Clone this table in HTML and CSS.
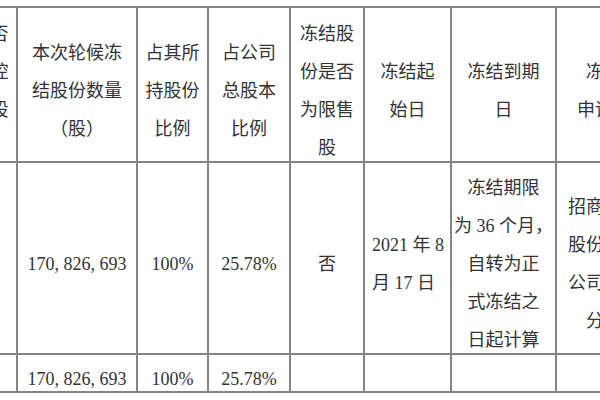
FILE: index.html
```html
<!DOCTYPE html>
<html lang="zh-CN">
<head>
<meta charset="utf-8">
<title>冻结股份</title>
<link rel="stylesheet" href="styles.css">
</head>
<body>
<div class="page">
  <div class="grid">
    <div class="cell"><div class="txt">是否<br>为控<br>股股<br>东</div></div>
    <div class="cell"><div class="txt">本次轮候冻<br>结股份数量<br>（股）</div></div>
    <div class="cell"><div class="txt">占其所<br>持股份<br>比例</div></div>
    <div class="cell"><div class="txt">占公司<br>总股本<br>比例</div></div>
    <div class="cell"><div class="txt">冻结股<br>份是否<br>为限售<br>股</div></div>
    <div class="cell"><div class="txt">冻结起<br>始日</div></div>
    <div class="cell"><div class="txt">冻结到期<br>日</div></div>
    <div class="cell"><div class="txt">冻结<br>申请人</div></div>

    <div class="cell"><div class="txt">是</div></div>
    <div class="cell"><div class="txt">170, 826, 693</div></div>
    <div class="cell"><div class="txt">100%</div></div>
    <div class="cell"><div class="txt">25.78%</div></div>
    <div class="cell"><div class="txt">否</div></div>
    <div class="cell cell-left"><div class="txt">2021 年 8<br>月 17 日</div></div>
    <div class="cell"><div class="txt">冻结期限<br>为 36 个月，<br>自转为正<br>式冻结之<br>日起计算</div></div>
    <div class="cell"><div class="txt">招商银行<br>股份有限<br>公司深圳<br>分行</div></div>

    <div class="cell"></div>
    <div class="cell"><div class="txt">170, 826, 693</div></div>
    <div class="cell"><div class="txt">100%</div></div>
    <div class="cell"><div class="txt">25.78%</div></div>
    <div class="cell"></div>
    <div class="cell"></div>
    <div class="cell"></div>
    <div class="cell"></div>
  </div>
</div>
</body>
</html>
```

FILE: styles.css
```css
html, body {
  margin: 0;
  padding: 0;
  background: #ffffff;
}

.page {
  width: 600px;
  height: 400px;
  overflow: hidden;
  background: #ffffff;
}

.grid {
  display: grid;
  grid-template-columns: 51px 118px 69px 80px 72px 85px 103px 94px;
  grid-template-rows: 153px 190px 36px;
  gap: 2px;
  padding: 2px;
  width: max-content;
  margin: 6px 0 0 -37px;
  background: #858585;
}

.cell {
  background: #ffffff;
  display: flex;
  flex-direction: column;
  align-items: center;
  justify-content: center;
  padding-top: 12px;
  box-sizing: border-box;
  min-height: 0;
  font-family: "Liberation Serif", "Noto Sans CJK SC", serif;
  font-size: 18px;
  line-height: 38px;
  color: #333333;
  white-space: nowrap;
}

.cell-left {
  align-items: flex-start;
  padding-left: 7px;
}

.txt {
  text-align: center;
}

.cell-left .txt {
  text-align: left;
}
```
